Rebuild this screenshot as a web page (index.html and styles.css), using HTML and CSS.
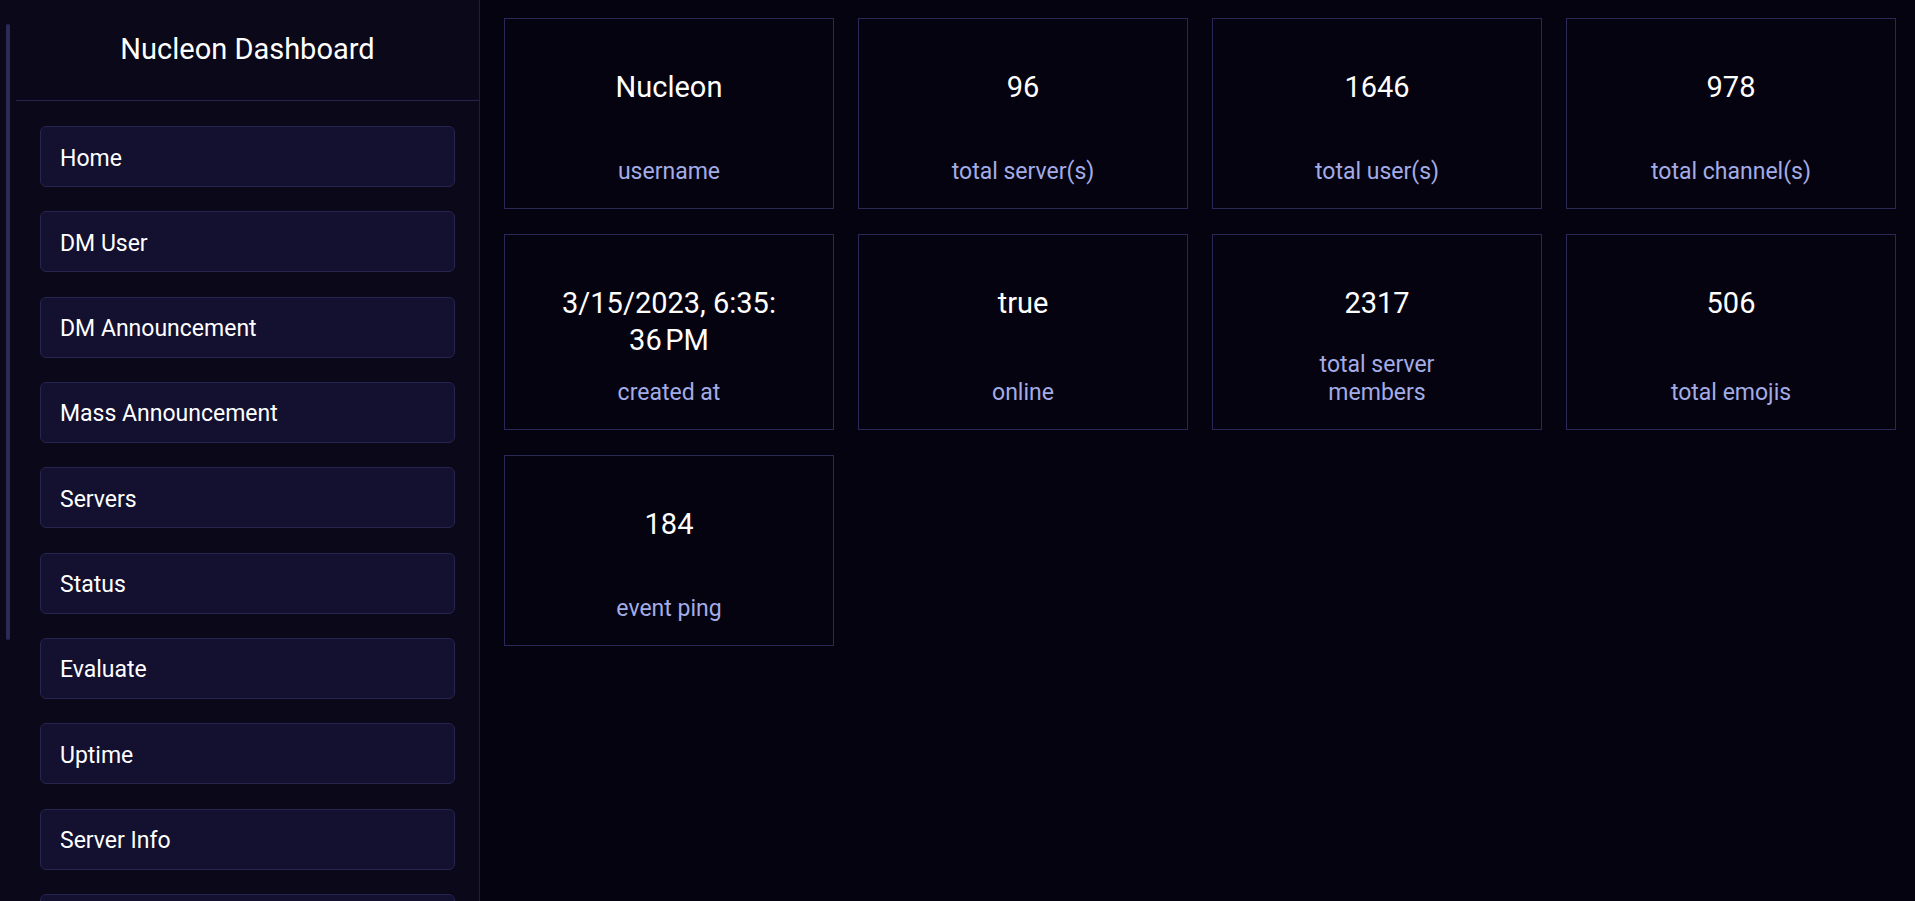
FILE: index.html
```html
<!DOCTYPE html>
<html lang="en">
<head>
<meta charset="utf-8">
<title>Nucleon Dashboard</title>
<link rel="stylesheet" href="styles.css">
</head>
<body>
<div class="layout">
  <aside class="sidebar">
    <div class="scroll-thumb"></div>
    <div class="sidebar-inner">
      <header class="brand">
        <h1 class="brand-title">Nucleon Dashboard</h1>
      </header>
      <nav class="nav">
        <a class="nav-item" href="#">Home</a>
        <a class="nav-item" href="#">DM User</a>
        <a class="nav-item" href="#">DM Announcement</a>
        <a class="nav-item" href="#">Mass Announcement</a>
        <a class="nav-item" href="#">Servers</a>
        <a class="nav-item" href="#">Status</a>
        <a class="nav-item" href="#">Evaluate</a>
        <a class="nav-item" href="#">Uptime</a>
        <a class="nav-item" href="#">Server Info</a>
        <a class="nav-item" href="#" aria-label="More"></a>
      </nav>
    </div>
  </aside>
  <main class="main">
    <section class="stats">
      <div class="card"><div class="card-value">Nucleon</div><div class="card-label">username</div></div>
      <div class="card"><div class="card-value">96</div><div class="card-label">total server(s)</div></div>
      <div class="card"><div class="card-value">1646</div><div class="card-label">total user(s)</div></div>
      <div class="card"><div class="card-value">978</div><div class="card-label">total channel(s)</div></div>
      <div class="card"><div class="card-value date">3/15/2023, 6:35:<br>36&#8239;PM</div><div class="card-label">created at</div></div>
      <div class="card"><div class="card-value">true</div><div class="card-label">online</div></div>
      <div class="card"><div class="card-value">2317</div><div class="card-label">total server members</div></div>
      <div class="card"><div class="card-value">506</div><div class="card-label">total emojis</div></div>
      <div class="card"><div class="card-value">184</div><div class="card-label">event ping</div></div>
    </section>
  </main>
</div>
</body>
</html>
```
FILE: styles.css
```css
* { box-sizing: border-box; }

html, body {
  margin: 0;
  height: 100%;
  background: #05030f;
  color: #ffffff;
  font-family: Roboto, "Open Sans", sans-serif;
}

.layout {
  display: flex;
  height: 100vh;
  overflow: hidden;
}

.sidebar {
  position: relative;
  flex: 0 0 480px;
  height: 100%;
  overflow: hidden;
  background: #0a0819;
  border-right: 1px solid #1f1d3d;
  padding-left: 16px;
}

.scroll-thumb {
  position: absolute;
  left: 6px;
  top: 24px;
  width: 4px;
  height: 616px;
  border-radius: 2px;
  background: #2c2a57;
}

.brand {
  height: 101px;
  padding-top: 30px;
  border-bottom: 1px solid #25234a;
  text-align: center;
}

.brand-title {
  margin: 0;
  font-size: 29px;
  line-height: 38px;
  font-weight: 400;
}

.nav {
  display: flex;
  flex-direction: column;
  gap: 24.33px;
  padding: 25px 24px 0 24px;
}

.nav-item {
  display: flex;
  align-items: center;
  height: 61px;
  flex: none;
  padding: 3px 19px 0;
  background: #131030;
  border: 1px solid #27244f;
  border-radius: 6px;
  color: #ffffff;
  text-decoration: none;
  font-size: 23px;
}

.main {
  flex: 1;
  padding: 18px 0 0 24px;
}

.stats {
  display: grid;
  grid-template-columns: repeat(4, 330px);
  column-gap: 24px;
  row-gap: 25px;
}

.card {
  display: flex;
  flex-direction: column;
  justify-content: space-between;
  align-items: center;
  min-height: 191px;
  padding: 48.6px 20px 23px;
  border: 1px solid #2a2857;
  text-align: center;
}

.card-value {
  font-size: 29px;
  line-height: 38px;
  color: #ffffff;
}

.card-value.date {
  line-height: 37px;
  margin-top: 1px;
}

.card-label {
  margin-top: 20px;
  max-width: 180px;
  font-size: 23px;
  line-height: 27.5px;
  color: #a3ace6;
}
```
